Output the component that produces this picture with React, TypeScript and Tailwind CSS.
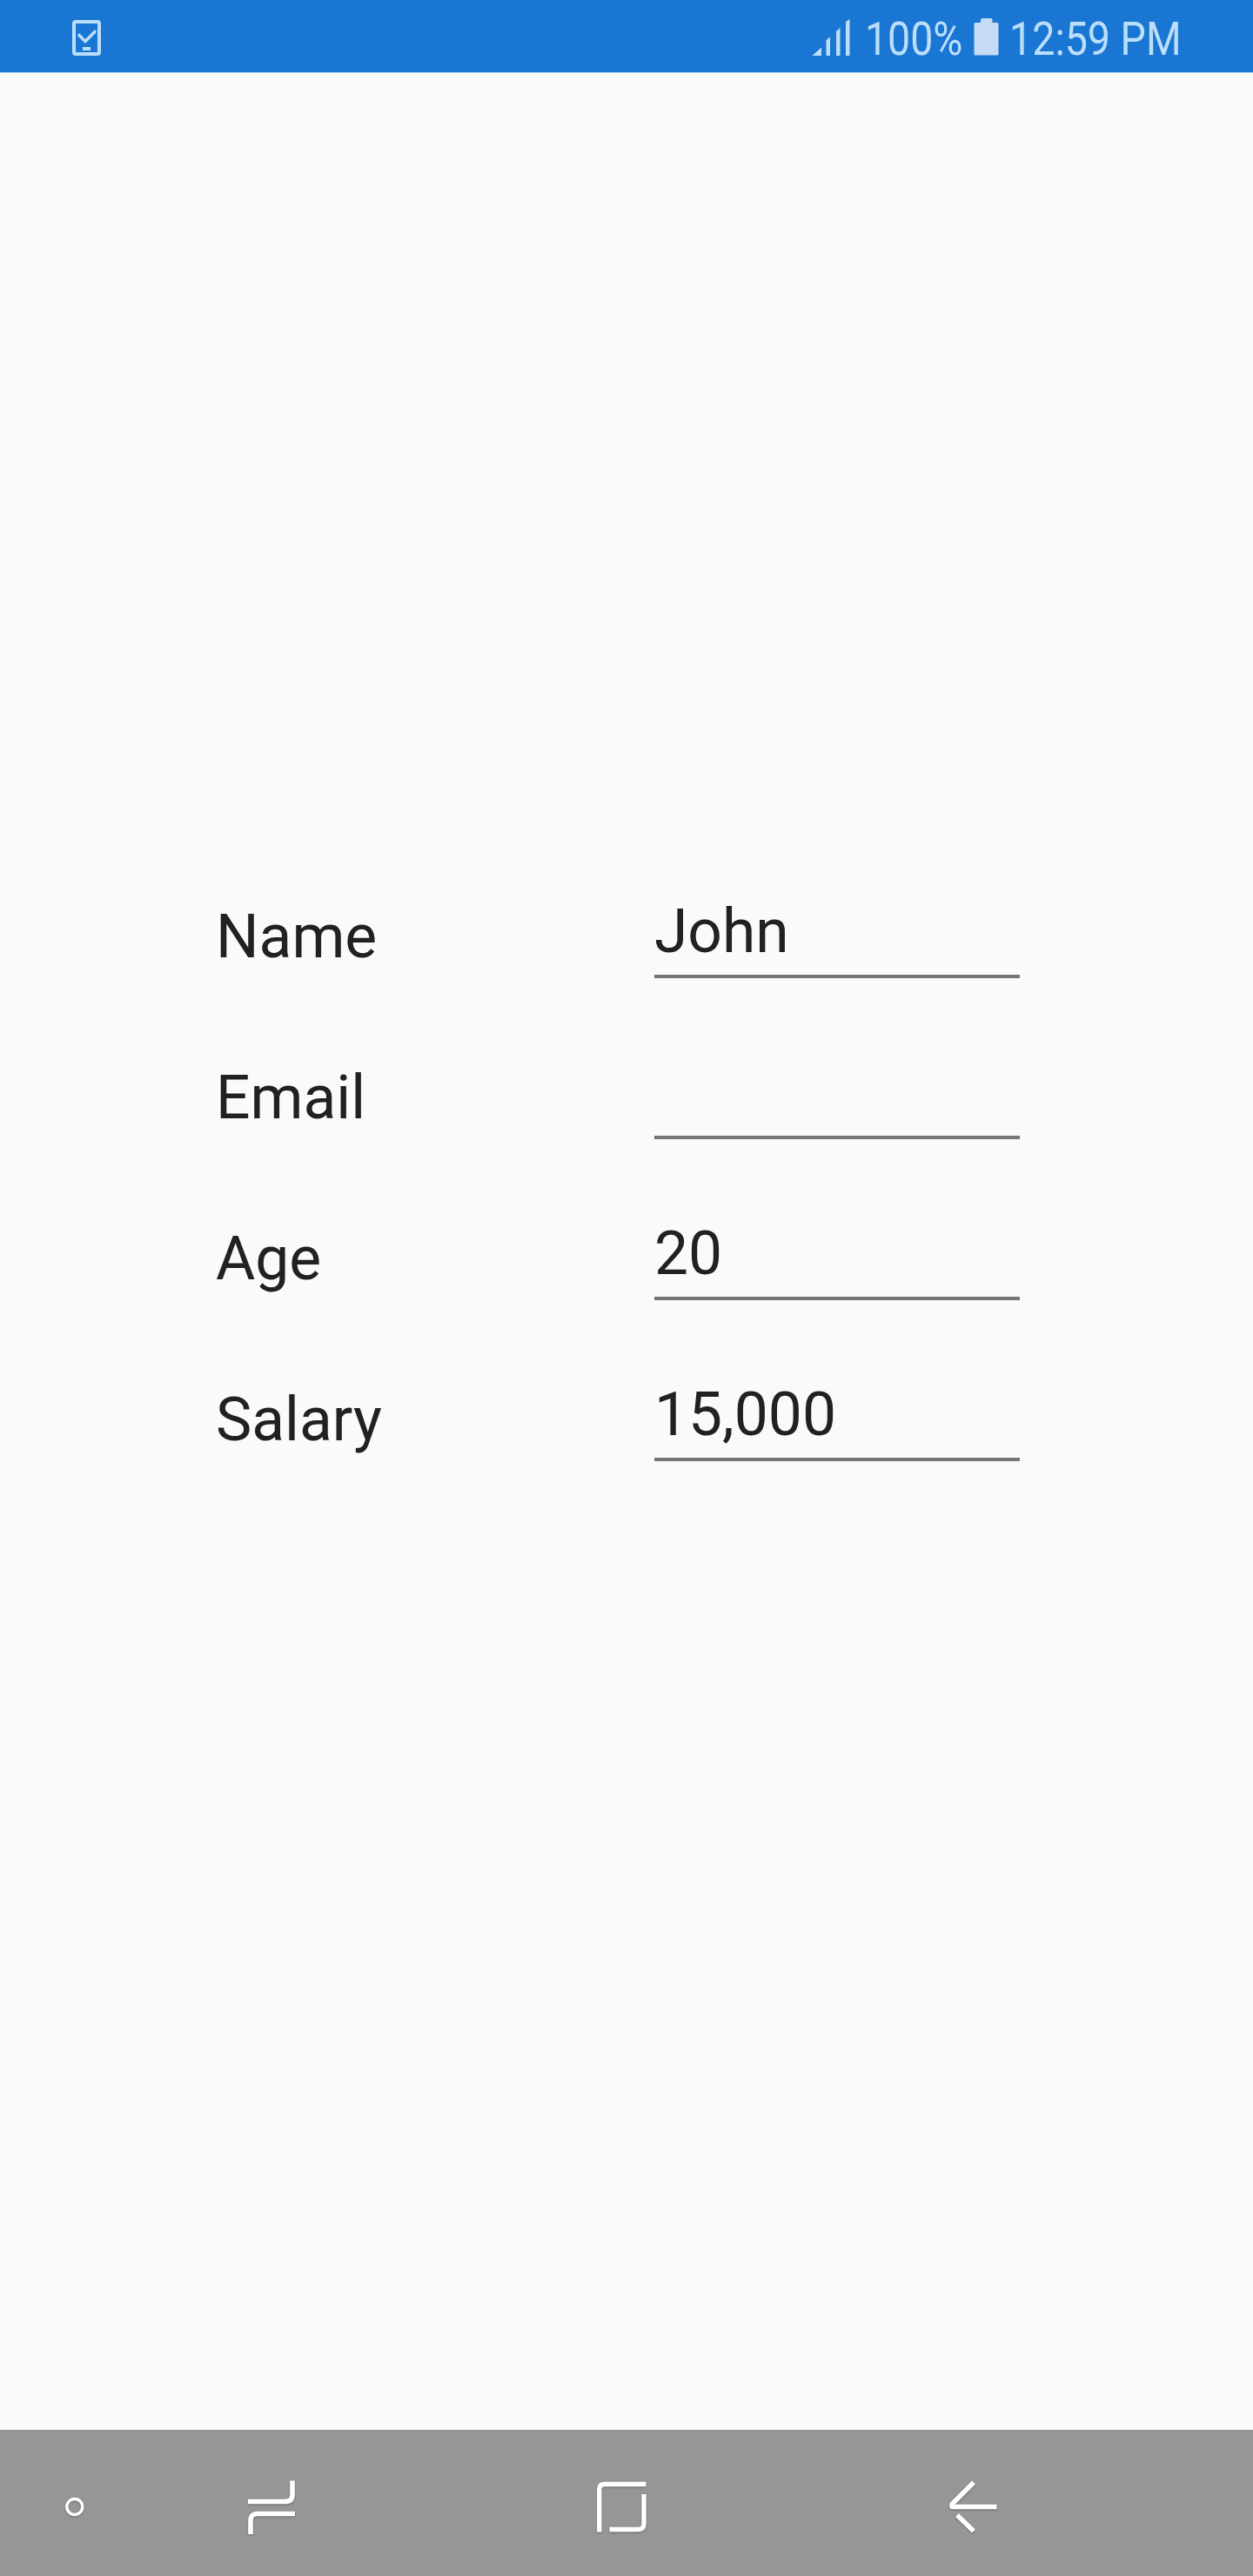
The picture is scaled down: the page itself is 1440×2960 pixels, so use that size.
import React from "react";

const fields = [
  { label: "Name", value: "John" },
  { label: "Email", value: "" },
  { label: "Age", value: "20" },
  { label: "Salary", value: "15,000" },
];

function StatusBar() {
  return (
    <header className="flex h-[84px] shrink-0 items-start border-b border-[#bfe0fb] bg-[#1976d2] text-[54px] leading-[63px] text-[#bbdefb]">
      <svg className="mt-[22px] ml-[82px] h-[43px] w-[36px]" viewBox="0 0 36 43" fill="none" stroke="currentColor">
        <rect x="3" y="3" width="29" height="37" rx="2" strokeWidth="4" />
        <path d="M9 18.5L16 25.5L27 14.5" strokeWidth="3.6" strokeLinecap="round" />
        <path d="M13 34H22" strokeWidth="4" />
      </svg>
      <svg className="mt-[22px] ml-[815px] h-[42px] w-[44px]" viewBox="0 0 44 42" fill="currentColor">
        <path d="M0.5 42L11 32.5V42Z" />
        <path d="M16.500 42V24L21 20.500V42Z" />
        <path d="M28 42V14L32.500 10V42Z" />
        <path d="M39 42V3L43.500 0V42Z" />
      </svg>
      <span className="mt-[13px] ml-[17px] block w-[114px] origin-left scale-x-[0.86] whitespace-nowrap">100%</span>
      <svg className="mt-[21px] ml-[11px] h-[43px] w-[29px]" viewBox="0 0 29 43" fill="#c5dcf4">
        <path d="M8 1.500Q8 0 9.500 0H20Q21.500 0 21.500 1.500V5H27Q28.500 5 28.500 6.500V41Q28.500 42.500 27 42.500H2Q0.500 42.500 0.500 41V6.500Q0.500 5 2 5H8Z" />
      </svg>
      <span className="mt-[13px] ml-[12px] block w-[200px] origin-left scale-x-[0.863] whitespace-nowrap">12:59 PM</span>
    </header>
  );
}

function NavigationBar() {
  return (
    <nav className="flex h-[168px] shrink-0 items-center bg-[#969696] text-white">
      <svg className="mt-[8px] ml-[74px] h-[24px] w-[24px] drop-shadow-[0_1px_1px_rgba(0,0,0,0.3)]" viewBox="0 0 24 24" fill="none" stroke="currentColor">
        <circle cx="11.800" cy="12.500" r="9" strokeWidth="3.500" />
      </svg>
      <svg className="mt-[8px] ml-[184px] h-[66px] w-[60px] drop-shadow-[0_1px_1px_rgba(0,0,0,0.3)]" viewBox="0 0 60 66" fill="none" stroke="currentColor" strokeWidth="5.600">
        <path d="M3 27.500H46Q54 27.500 54 19.500V3.500" />
        <path d="M57 41.500H14Q6 41.500 6 49.500V65" />
      </svg>
      <svg className="mt-[8px] ml-[343px] h-[64px] w-[62px] drop-shadow-[0_1px_1px_rgba(0,0,0,0.3)]" viewBox="0 0 62 64" fill="none" stroke="currentColor" strokeWidth="5.400">
        <path d="M3.800 61.500V12Q3.800 6.500 10 6.500H57.500" />
        <path d="M55 18V52Q55 58.500 48.500 58.500H15.500" />
      </svg>
      <svg className="mt-[8px] ml-[342px] h-[64px] w-[60px] drop-shadow-[0_1px_1px_rgba(0,0,0,0.3)]" viewBox="0 0 60 64" fill="none" stroke="currentColor" strokeWidth="5.400" strokeLinejoin="round">
        <path d="M30 4.500L5 29.500V32.500H56.500" />
        <path d="M11 42L30 60.500" />
      </svg>
    </nav>
  );
}

export default function App() {
  return (
    <div className="flex h-[2960px] w-[1440px] flex-col overflow-hidden bg-[#fafafa] font-['Roboto',sans-serif]">
      <StatusBar />
      <main className="flex flex-1 flex-col gap-[90px] pt-[945px] pl-[248px] text-[69.5px] leading-[82px] text-[#212121]">
        {fields.map(({ label, value }) => (
          <label key={label} className="flex h-[95px] items-start">
            <span className="mt-[7px] w-[504px]">{label}</span>
            <input
              className="h-[95px] w-[420px] border-b-4 border-[#757575] bg-transparent pb-[9px] outline-none"
              defaultValue={value}
            />
          </label>
        ))}
      </main>
      <NavigationBar />
    </div>
  );
}
